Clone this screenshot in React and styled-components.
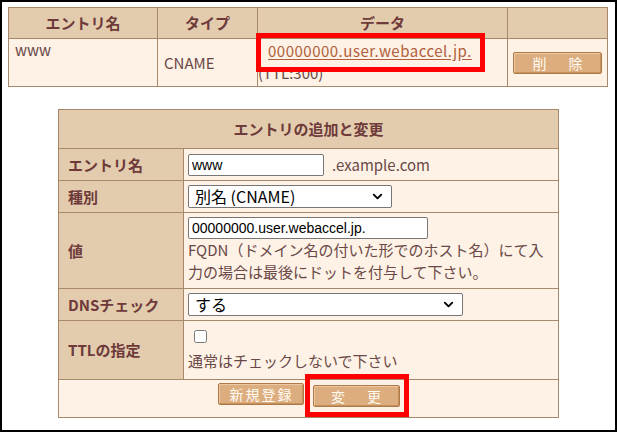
import React from 'react';
import styled, { createGlobalStyle } from 'styled-components';
import { ChevronDown } from 'lucide-react';

const GlobalStyle = createGlobalStyle`
  html, body {
    margin: 0;
    padding: 0;
    background: #fff;
  }
  body {
    font-family: "Noto Sans CJK JP", "Noto Sans", sans-serif;
    color: #6b4848;
  }
`;

const Frame = styled.div`
  width: 617px;
  height: 432px;
  box-sizing: border-box;
  border: 2px solid #000;
  padding: 5px 0 0 6px;
  overflow: hidden;
`;

const Table = styled.table`
  border-collapse: collapse;
  table-layout: fixed;
  width: ${(p) => p.$width};
  margin: ${(p) => p.$margin || '0'};
  font-size: 15px;
`;

const Head = styled.th`
  background: #e3ccad;
  border: 1px solid #a8886a;
  color: #6e3a3a;
  font-weight: bold;
  font-size: 15px;
  height: ${(p) => p.$h || '30px'};
  padding: 0;
  line-height: 20px;
  text-align: ${(p) => p.$align || 'center'};
  padding-left: ${(p) => p.$pl || '0'};
`;

const Cell = styled.td`
  background: #fdf2e5;
  border: 1px solid #a8886a;
  height: ${(p) => p.$h || '30px'};
  padding: ${(p) => p.$pad || '0 4px'};
  vertical-align: ${(p) => p.$va || 'middle'};
  text-align: ${(p) => p.$align || 'left'};
  line-height: ${(p) => p.$lh || '22px'};
  color: #6b4848;
`;

const Highlight = styled.span`
  position: relative;
  display: inline-block;
  vertical-align: top;
  margin-left: ${(p) => p.$ml || '0'};
  &::after {
    content: '';
    position: absolute;
    inset: ${(p) => p.$inset};
    border: 5px solid #ff0000;
    pointer-events: none;
  }
`;

const DataLink = styled.a`
  color: #b0603c;
  text-decoration: underline;
  text-underline-offset: 2px;
  letter-spacing: 0.5px;
`;

const Button = styled.button`
  display: inline-block;
  vertical-align: middle;
  width: ${(p) => p.$w || '89px'};
  height: 22px;
  margin: 0;
  padding: 0 0 0 ${(p) => p.$ls || '0'};
  background: #dcad7e;
  border: 1px solid #b07a48;
  border-radius: 2px;
  box-shadow: inset 1px 1px 0 #ecc9a4, inset -1px -1px 0 #c4915e;
  color: #fffaf2;
  font-family: "Noto Sans CJK JP", sans-serif;
  font-size: 14px;
  font-weight: normal;
  line-height: 20px;
  letter-spacing: ${(p) => p.$ls || '0'};
`;

const Row = styled.div`
  display: flex;
  align-items: center;
  height: 30px;
`;

const TextInput = styled.input`
  display: block;
  box-sizing: border-box;
  width: ${(p) => p.$w};
  height: 22px;
  margin: 0;
  border: 1px solid #767676;
  border-radius: 2px;
  padding: 0 3px;
  font-family: "Liberation Sans", Arial, sans-serif;
  font-size: 14px;
  color: #000;
  background: #fff;
`;

const SelectWrap = styled.span`
  position: relative;
  display: block;
`;

const Select = styled.select`
  display: block;
  appearance: none;
  box-sizing: border-box;
  width: ${(p) => p.$w};
  height: 23px;
  margin: 0;
  border: 1px solid #767676;
  border-radius: 2px;
  padding: 0 0 0 6px;
  background: #fff;
  color: #000;
  font-family: "Noto Sans CJK JP", sans-serif;
  font-size: 16px;
  line-height: 21px;
`;

const Arrow = styled.span`
  position: absolute;
  right: 7px;
  top: 4px;
  display: flex;
  color: #000;
  pointer-events: none;
`;

const Suffix = styled.span`
  margin-left: 8px;
  line-height: 20px;
`;

const Line = styled.div`
  line-height: ${(p) => p.$lh || '22px'};
  white-space: nowrap;
`;

const Check = styled.input`
  display: block;
  width: 13px;
  height: 13px;
  margin: 0 0 0 6px;
`;

const ButtonRow = styled.div`
  display: flex;
  justify-content: center;
  align-items: flex-start;
  gap: 9px;
  height: 37px;
  padding-top: 3px;
  box-sizing: border-box;
`;

const Dropdown = ({ width, value }) => (
  <SelectWrap>
    <Select $w={width} defaultValue={value}>
      <option>{value}</option>
    </Select>
    <Arrow>
      <ChevronDown size={15} strokeWidth={3} />
    </Arrow>
  </SelectWrap>
);

const App = () => (
  <>
    <GlobalStyle />
    <Frame>
      <Table $width="600px">
        <colgroup>
          <col style={{ width: 149 }} />
          <col style={{ width: 100 }} />
          <col style={{ width: 250 }} />
          <col style={{ width: 100 }} />
        </colgroup>
        <thead>
          <tr>
            <Head>エントリ名</Head>
            <Head>タイプ</Head>
            <Head>データ</Head>
            <Head />
          </tr>
        </thead>
        <tbody>
          <tr>
            <Cell $h="47px" $va="top" $pad="0 6px">
              www
            </Cell>
            <Cell $h="47px" $pad="0 6px">
              CNAME
            </Cell>
            <Cell $h="46px" $va="top" $pad="1px 0 0 0">
              <Highlight $ml="10px" $inset="-7px -13px -10px -12px">
                <DataLink href="#">00000000.user.webaccel.jp.</DataLink>
              </Highlight>
              <br />
              (TTL:300)
            </Cell>
            <Cell $h="47px" $align="center" $pad="0">
              <Button $ls="4px">削　除</Button>
            </Cell>
          </tr>
        </tbody>
      </Table>

      <Table $width="500px" $margin="22px 0 0 50px">
        <colgroup>
          <col style={{ width: 125 }} />
          <col style={{ width: 375 }} />
        </colgroup>
        <thead>
          <tr>
            <Head colSpan={2} $h="38px">
              エントリの追加と変更
            </Head>
          </tr>
        </thead>
        <tbody>
          <tr>
            <Head $align="left" $pl="9px" $h="31px">エントリ名</Head>
            <Cell $h="31px">
              <Row>
                <TextInput $w="136px" defaultValue="www" />
                <Suffix>.example.com</Suffix>
              </Row>
            </Cell>
          </tr>
          <tr>
            <Head $align="left" $pl="9px" $h="31px">種別</Head>
            <Cell $h="31px">
              <Row>
                <Dropdown width="204px" value="別名 (CNAME)" />
              </Row>
            </Cell>
          </tr>
          <tr>
            <Head $align="left" $pl="9px" $h="75px">値</Head>
            <Cell $h="71px" $va="top" $pad="4px 4px 0">
              <TextInput $w="240px" defaultValue="00000000.user.webaccel.jp." />
              <Line>FQDN（ドメイン名の付いた形でのホスト名）にて入</Line>
              <Line>力の場合は最後にドットを付与して下さい。</Line>
            </Cell>
          </tr>
          <tr>
            <Head $align="left" $pl="9px" $h="31px">DNSチェック</Head>
            <Cell $h="31px">
              <Row>
                <Dropdown width="275px" value="する" />
              </Row>
            </Cell>
          </tr>
          <tr>
            <Head $align="left" $pl="9px" $h="58px">TTLの指定</Head>
            <Cell $h="49px" $va="top" $pad="9px 4px 0">
              <Check type="checkbox" />
              <Line $lh="36px">通常はチェックしないで下さい</Line>
            </Cell>
          </tr>
          <tr>
            <Cell colSpan={2} $h="37px" $pad="0" $va="top">
              <ButtonRow>
                <Button $w="86px" $ls="2px">新規登録</Button>
                <Highlight $inset="-9px -9px -10px -8px">
                  <Button $w="87px" $ls="4px">変　更</Button>
                </Highlight>
              </ButtonRow>
            </Cell>
          </tr>
        </tbody>
      </Table>
    </Frame>
  </>
);

export default App;
